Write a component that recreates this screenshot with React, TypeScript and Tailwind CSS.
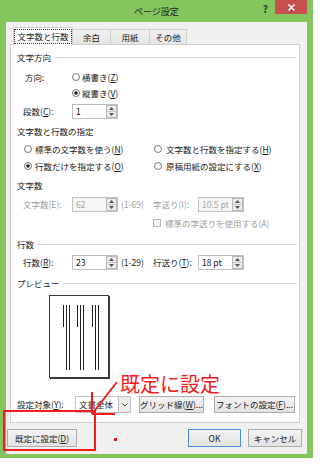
import type { ReactNode } from 'react'

function Radio({ on }: { on?: boolean }) {
  return (
    <svg width="8" height="8" viewBox="0 0 8 8" className="shrink-0">
      <circle cx="4" cy="4" r="3.5" fill="#fff" stroke="#555" strokeWidth="0.8" />
      {on && <circle cx="4" cy="4" r="1.8" fill="#222" />}
    </svg>
  )
}

function Arrows() {
  return (
    <div className="flex w-[11px] flex-col border border-[#b9b9b9] bg-[#ececec]">
      <div className="flex flex-1 items-center justify-center border-b border-[#c8c8c8]">
        <svg width="5" height="3" viewBox="0 0 5 3">
          <path d="M0 3L2.5 0L5 3Z" fill="#555" />
        </svg>
      </div>
      <div className="flex flex-1 items-center justify-center">
        <svg width="5" height="3" viewBox="0 0 5 3">
          <path d="M0 0L2.5 3L5 0Z" fill="#555" />
        </svg>
      </div>
    </div>
  )
}

function Spin({ value, dim }: { value: string; dim?: boolean }) {
  return (
    <div
      className={`flex h-[15px] w-[46px] border border-[#c2c2c2] ${
        dim ? 'bg-[#f6f6f6] text-[#a9a9a9]' : 'bg-white text-[#111]'
      }`}
    >
      <div className="flex-1 pl-[3px] leading-[13px]">{value}</div>
      <Arrows />
    </div>
  )
}

function Heading({ children, line }: { children: ReactNode; line?: boolean }) {
  return (
    <div className="flex h-[14px] items-center pl-[6px] pr-[2px]">
      <span>{children}</span>
      {line && <div className="ml-[3px] h-px flex-1 bg-[#dcdcdc]" />}
    </div>
  )
}

function Btn({ children, className = '' }: { children: ReactNode; className?: string }) {
  return (
    <div
      className={`flex items-center justify-center border border-[#adadad] bg-gradient-to-b from-[#f3f3f3] to-[#e3e3e3] text-[#222] ${className}`}
    >
      {children}
    </div>
  )
}

function Preview() {
  const groups = [14, 28, 43]
  return (
    <div className="ml-[38px] mt-[5px] h-[83px] w-[60px] border border-[#3a3a3a] bg-white shadow-[1px_1px_0_#3a3a3a]">
      <svg width="58" height="81" viewBox="0 0 58 81">
        {groups.map((x) => (
          <g key={x} stroke="#222" strokeWidth="1">
            <line x1={x - 0.5} y1="9" x2={x - 0.5} y2="31" />
            <line x1={x + 2.5} y1="9" x2={x + 2.5} y2="74" />
            <line x1={x + 5.5} y1="9" x2={x + 5.5} y2="74" />
          </g>
        ))}
      </svg>
    </div>
  )
}

export default function App() {
  return (
    <div className="relative h-[464px] w-[320px] overflow-hidden bg-white font-['Noto_Sans_CJK_JP',sans-serif] text-[8.5px] leading-none text-[#1a1a1a]">
      <div className="flex h-[458px] w-[313px] flex-col bg-[#84c55e] pb-[4px]">
        {/* title bar */}
        <div className="flex h-[22px] items-start">
          <div className="flex-1 pl-[50px] pt-[7px] text-center text-[9px] text-[#222]">ページ設定</div>
          <div className="mr-[7px] pt-[4px] text-[10px] font-bold text-[#333]">?</div>
          <div className="mr-[6px] flex h-[14px] w-[32px] items-center justify-center bg-[#c75050]">
            <svg width="7" height="7" viewBox="0 0 7 7">
              <path d="M0.5 0.5L6.5 6.5M6.5 0.5L0.5 6.5" stroke="#fff" strokeWidth="1.5" />
            </svg>
          </div>
        </div>

        {/* body */}
        <div className="mx-[6px] flex flex-1 flex-col bg-[#f0f0f0] pt-[5px]">
          <div className="relative z-10 -mb-px ml-[7px] flex h-[18px] items-end">
            <div className="flex h-[18px] w-[60px] items-center justify-center border-x border-t border-[#cfcfcf] bg-white">
              <span className="border border-dotted border-[#333] px-[2px] py-[2px]">文字数と行数</span>
            </div>
            <div className="mb-px flex h-[15px] w-[38px] items-center justify-center border-r border-t border-[#cfcfcf] bg-gradient-to-b from-[#f0f0f0] to-[#e5e5e5]">
              余白
            </div>
            <div className="mb-px flex h-[15px] w-[39px] items-center justify-center border-r border-t border-[#cfcfcf] bg-gradient-to-b from-[#f0f0f0] to-[#e5e5e5]">
              用紙
            </div>
            <div className="mb-px flex h-[15px] w-[37px] items-center justify-center border-r border-t border-[#cfcfcf] bg-gradient-to-b from-[#f0f0f0] to-[#e5e5e5]">
              その他
            </div>
          </div>

          <div className="ml-[4px] mr-[7px] flex h-[379px] flex-col border border-[#cfcfcf] bg-white">
            <div className="mt-[5px]">
              <Heading line>文字方向</Heading>
            </div>
            <div className="mt-[5px] flex h-[16px] items-center">
              <div className="w-[61px] pl-[14px]">方向:</div>
              <Radio />
              <span className="ml-[2px]">
                横書き(<u>Z</u>)
              </span>
            </div>
            <div className="flex h-[16px] items-center pl-[61px]">
              <Radio on />
              <span className="ml-[2px]">
                縦書き(<u>V</u>)
              </span>
            </div>
            <div className="mt-[2px] flex h-[16px] items-center">
              <div className="w-[61px] pl-[12px]">
                段数(<u>C</u>):
              </div>
              <Spin value="1" />
            </div>

            <div className="mt-[5px]">
              <Heading>文字数と行数の指定</Heading>
            </div>
            <div className="mt-[3px] flex h-[16px] items-center">
              <div className="flex w-[143px] items-center pl-[13px]">
                <Radio />
                <span className="ml-[3px]">
                  標準の文字数を使う(<u>N</u>)
                </span>
              </div>
              <Radio />
              <span className="ml-[4px]">
                文字数と行数を指定する(<u>H</u>)
              </span>
            </div>
            <div className="mt-[1px] flex h-[16px] items-center">
              <div className="flex w-[143px] items-center pl-[13px]">
                <Radio on />
                <span className="ml-[3px]">
                  行数だけを指定する(<u>O</u>)
                </span>
              </div>
              <Radio />
              <span className="ml-[4px]">
                原稿用紙の設定にする(<u>X</u>)
              </span>
            </div>

            <div className="mt-[4px]">
              <Heading>文字数</Heading>
            </div>
            <div className="mt-[4px] flex h-[16px] items-center text-[#9d9d9d]">
              <div className="w-[61px] pl-[12px]">文字数(E):</div>
              <Spin value="62" dim />
              <div className="w-[35px] pl-[3px]">(1-69)</div>
              <div className="w-[45px]">字送り(I):</div>
              <Spin value="10.5 pt" dim />
            </div>
            <div className="mt-[3px] flex h-[16px] items-center pl-[142px] text-[#9d9d9d]">
              <div className="h-[8px] w-[8px] border border-[#b5b5b5] bg-[#f4f4f4]" />
              <span className="ml-[4px]">標準の字送りを使用する(A)</span>
            </div>

            <div className="mt-[6px]">
              <Heading line>行数</Heading>
            </div>
            <div className="mt-[3px] flex h-[16px] items-center">
              <div className="w-[61px] pl-[12px]">
                行数(<u>R</u>):
              </div>
              <Spin value="23" />
              <div className="w-[35px] pl-[3px]">(1-29)</div>
              <div className="w-[45px]">
                行送り(<u>T</u>):
              </div>
              <Spin value="18 pt" />
            </div>

            <div className="mt-[6px]">
              <Heading line>プレビュー</Heading>
            </div>
            <Preview />

            <div className="mt-[18px] flex h-[17px] items-center">
              <div className="w-[64px] pl-[6px]">
                設定対象(<u>Y</u>):
              </div>
              <div className="flex h-[17px] w-[56px] border border-[#c2c2c2] bg-white">
                <div className="flex-1 pl-[3px] leading-[15px]">文書全体</div>
                <div className="flex w-[12px] items-center justify-center border-l border-[#c2c2c2] bg-[#ececec]">
                  <svg width="6" height="4" viewBox="0 0 6 4">
                    <path d="M0.5 0.5L3 3L5.5 0.5" fill="none" stroke="#444" strokeWidth="1" />
                  </svg>
                </div>
              </div>
              <Btn className="ml-[8px] h-[17px] w-[65px]">
                グリッド線(<u>W</u>)...
              </Btn>
              <Btn className="ml-[10px] h-[17px] w-[81px]">
                フォントの設定(<u>F</u>)...
              </Btn>
            </div>
          </div>

          <div className="mt-[6px] flex h-[18px] items-center pl-[1px] pr-[5px]">
            <Btn className="h-[18px] w-[70px]">
              既定に設定(<u>D</u>)
            </Btn>
            <div className="ml-auto flex h-[18px] w-[53px] items-center justify-center border border-[#4a8fd8] bg-gradient-to-b from-[#f3f3f3] to-[#e3e3e3]">
              OK
            </div>
            <Btn className="ml-[7px] h-[18px] w-[54px]">キャンセル</Btn>
          </div>
        </div>
      </div>

      {/* red annotations */}
      <div className="absolute left-[120px] top-[374px] text-[20px] leading-none text-[#f41c1c]">既定に設定</div>
      <div className="absolute left-[3px] top-[410px] h-[41px] w-[93px] border-2 border-[#f41c1c]" />
      <svg className="absolute left-[85px] top-[378px]" width="40" height="42" viewBox="0 0 40 42">
        <g stroke="#f41c1c" strokeWidth="2" fill="none">
          <path d="M32 4L7 36" />
          <path d="M7 36V14" />
          <path d="M7 36H30" />
        </g>
      </svg>
      <div className="absolute left-[114px] top-[438px] h-[3px] w-[3px] bg-[#f41c1c]" />
    </div>
  )
}
